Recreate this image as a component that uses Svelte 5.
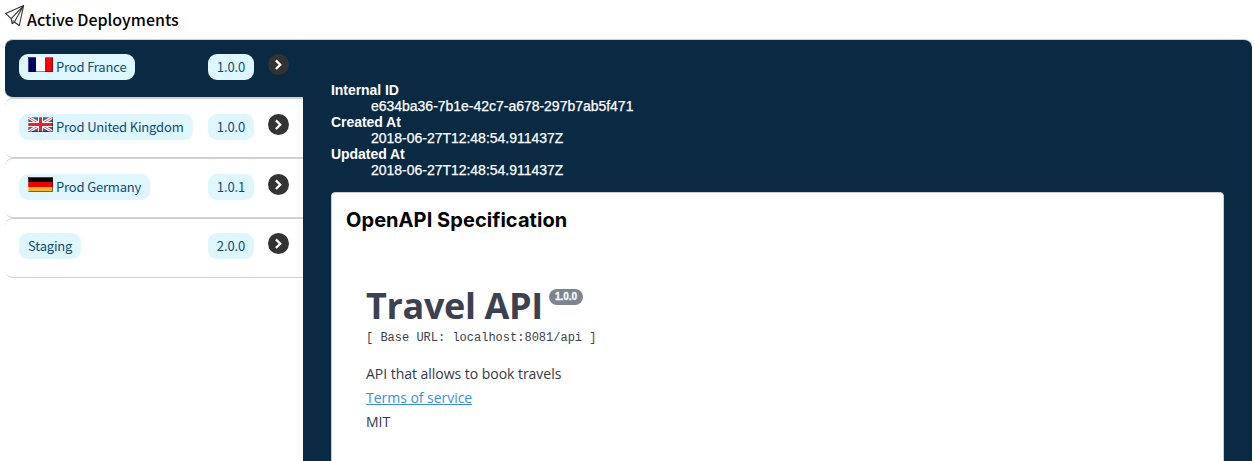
<script>
  const deployments = [
    { name: 'Prod France', version: '1.0.0', flag: 'fr', active: true },
    { name: 'Prod United Kingdom', version: '1.0.0', flag: 'gb' },
    { name: 'Prod Germany', version: '1.0.1', flag: 'de' },
    { name: 'Staging', version: '2.0.0' }
  ];
  const details = [
    ['Internal ID', 'e634ba36-7b1e-42c7-a678-297b7ab5f471'],
    ['Created At', '2018-06-27T12:48:54.911437Z'],
    ['Updated At', '2018-06-27T12:48:54.911437Z']
  ];
</script>

<div class="page">
  <header>
    <svg class="plane" width="20" height="22" viewBox="0 0 20 22" fill="none" stroke="#333" stroke-width="1.1" stroke-linejoin="round">
      <path d="M.6 8.4 18.6.6 14.3 20.5 9.6 17.2 7.2 18.6 6.2 13.6Z" />
      <path d="M6.2 13.6 18.6.6 9.4 17.1M7.2 18.6 8.4 15.4" />
    </svg>
    <h1>Active Deployments</h1>
  </header>
  <main>
    <nav>
      {#each deployments as d}
        <div class="row" class:active={d.active}>
          <span class="pill name">
            {#if d.flag}
              <svg class="flag" width="25" height="15" viewBox="0 0 25 15">
                {#if d.flag === 'fr'}
                  <path fill="#000066" d="M0 0h9v15H0z" /><path fill="#fff" d="M8 0h9v15H8z" /><path fill="#ff0010" d="M17 0h8v15h-8z" />
                {:else if d.flag === 'gb'}
                  <path fill="#4a5ca8" d="M0 0h25v15H0z" />
                  <path stroke="#fff" stroke-width="3.2" d="M0 0 25 15M25 0 0 15" />
                  <path stroke="#e66" stroke-width="1" d="M0 0 25 15M25 0 0 15" />
                  <path stroke="#fff" stroke-width="5" d="M12.5 0v15M0 7.5h25" />
                  <path stroke="#ef2028" stroke-width="3" d="M12.5 0v15M0 7.5h25" />
                {:else}
                  <path fill="#000" d="M0 0h25v5H0z" /><path fill="#f00000" d="M0 5h25v5H0z" /><path fill="#f4b52a" d="M0 10h25v5H0z" />
                {/if}
                <path fill="none" stroke="#000" stroke-opacity=".45" d="M24.5 0v14.5H0" />
                <path fill="none" stroke="#fff" stroke-opacity=".25" d="M.5 15V.5H25" />
              </svg>
            {/if}
            <span class="text">{d.name}</span>
          </span>
          <span class="pill version">{d.version}</span>
          <svg class="go" width="21" height="21" viewBox="0 0 21 21">
            <circle cx="10.5" cy="10.5" r="10.5" fill="#333" />
            <path d="m7.9 6.4 4.3 4.3L7.9 15" fill="none" stroke="#fff" stroke-width="2.3" />
          </svg>
        </div>
      {/each}
    </nav>
    <section>
      <dl>
        {#each details as [term, value]}
          <dt>{term}</dt>
          <dd>{value}</dd>
        {/each}
      </dl>
      <article>
        <h2>OpenAPI Specification</h2>
        <div class="info">
          <h3><span class="title">Travel API</span><span class="badge">1.0.0</span></h3>
          <pre>[ Base URL: localhost:8081/api ]</pre>
          <p>API that allows to book travels</p>
          <p><a href="#terms">Terms of service</a></p>
          <p>MIT</p>
        </div>
      </article>
    </section>
  </main>
</div>

<style>
  :global(body) { background: #fff; overflow: hidden; }
  .page { box-sizing: border-box; height: 461px; padding: 0 2px 0 5px; overflow: hidden; font-family: "Noto Sans CJK SC", sans-serif; }
  header { display: flex; height: 39px; padding-top: 5px; box-sizing: border-box; }
  h1 { margin: 3px 0 0 2px; font-size: 16px; line-height: 22px; font-weight: 500; white-space: nowrap; color: #000; }
  main { display: flex; box-sizing: border-box; height: 440px; border-top: 1px solid #ccc; border-radius: 8px 8px 0 0; background: linear-gradient(90deg, #fff 298px, #0a2a43 298px); }
  nav { width: 298px; flex: none; margin-top: -1px; }
  .row { box-sizing: border-box; display: flex; align-items: flex-start; height: 60px; padding: 15px 14px 0; border: solid #d0d0d0; border-width: 1px 0; border-radius: 8px 0 0 8px; }
  .row.active { height: 59px; padding-top: 14px; background: #0a2a43; }
  .row:last-child { padding-top: 14px; }
  .pill { box-sizing: border-box; display: flex; height: 26px; padding: 0 9px; border-radius: 9px; background: #def6ff; color: #0f4c75; font-size: 13px; letter-spacing: -0.17px; line-height: 26px; white-space: nowrap; }
  .flag { margin: 3px 3px 0 0; }
  .version { margin-left: auto; width: 46px; justify-content: center; padding: 0; letter-spacing: -0.1px; }
  .go { margin-left: 14px; }
  section { flex: 1; padding: 42px 28px 0; }
  dl { margin: 0; color: #fff; font: 14px/16px "Liberation Sans", Arial, sans-serif; }
  dt { font-weight: 700; letter-spacing: -0.05px; }
  dd { margin-left: 40px; letter-spacing: -0.02px; -webkit-text-stroke: 0.25px #fff; }
  article { box-sizing: border-box; height: 300px; margin-top: 14px; padding: 15px 14px 0; border: 1px solid #ccc; border-radius: 4px; background: #fff; }
  h2 { margin: 0; font: 700 20px/24px Inter, sans-serif; letter-spacing: 0.06px; color: #000; }
  .info { margin: 51px 0 0 20px; color: #3b4151; font-family: "Open Sans", sans-serif; }
  h3 { display: flex; margin: 0; height: 46px; font-size: 36px; line-height: 46px; font-weight: 700; }
  .title { letter-spacing: -0.35px; }
  .badge { height: 16px; margin: 6px 0 0 6px; padding: 0 6px; border-radius: 8px; background: #7d8492; color: #fff; font: 700 10px/16px "Liberation Sans", sans-serif; -webkit-text-stroke: 0.3px #fff; }
  pre { margin: 0 0 15px; font: 12px/18px "Liberation Mono", monospace; }
  p { margin: 0; font-size: 14px; letter-spacing: -0.03px; line-height: 24px; white-space: nowrap; }
  .info p { color: #333845; }
  .info a { color: #3b8ede; }
</style>
